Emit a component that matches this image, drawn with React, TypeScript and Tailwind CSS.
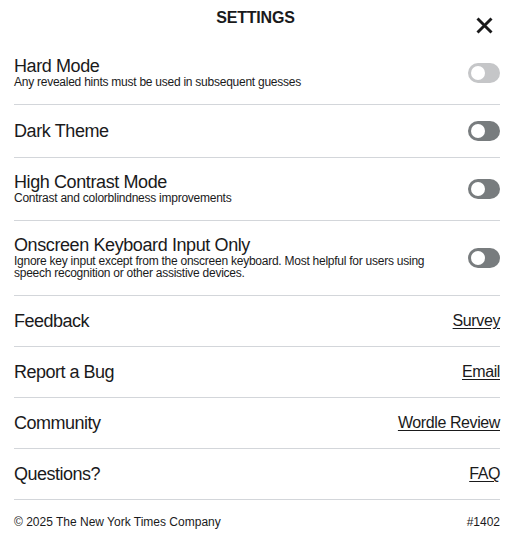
import React from "react";

const font = { fontFamily: '"Liberation Sans", Arial, sans-serif' };

function Toggle({ disabled }: { disabled?: boolean }) {
  return (
    <div
      className={`flex h-[20px] w-[32px] shrink-0 items-center rounded-full px-[3px] ${
        disabled ? "bg-[#c5c6c8]" : "bg-[#787c7e]"
      }`}
    >
      <div className="h-[14px] w-[14px] rounded-full bg-white" />
    </div>
  );
}

function ToggleRow({ title, desc, disabled }: { title: string; desc?: string; disabled?: boolean }) {
  return (
    <div
      className={`flex items-center justify-between border-b border-[#d3d6da] ${
        desc ? "pt-[15px] pb-[16px]" : "py-[16px]"
      }`}
    >
      <div className="flex flex-col pr-[34px]">
        <div
          className={`text-[18px] tracking-[-0.4px] text-[#1a1a1b] ${
            desc ? "leading-[19px]" : "leading-[18px]"
          }`}
        >
          {title}
        </div>
        {desc && (
          <div className="text-[12px] leading-[12px] tracking-[-0.25px] text-[#1a1a1b]">{desc}</div>
        )}
      </div>
      <Toggle disabled={disabled} />
    </div>
  );
}

function LinkRow({ title, link }: { title: string; link: string }) {
  return (
    <div className="flex items-center justify-between border-b border-[#d3d6da] py-[16px]">
      <div className="text-[18px] leading-[18px] tracking-[-0.5px] text-[#1a1a1b]">{title}</div>
      <a className="text-[16px] leading-[18px] tracking-[-0.4px] text-[#1a1a1b] underline underline-offset-2">
        {link}
      </a>
    </div>
  );
}

export default function App() {
  return (
    <div className="h-[553px] w-[511px] bg-white" style={font}>
      <div className="relative flex h-[42px] items-start justify-center pt-[9px]">
        <h1 className="text-[16px] font-bold leading-[18px] tracking-[-0.2px] text-[#1a1a1b]">SETTINGS</h1>
        <button className="absolute right-[18px] top-[17px] text-[#1a1a1b]">
          <svg width="17" height="17" viewBox="0 0 17 17" className="block">
            <path d="M1.5 1.5L15.5 15.5M15.5 1.5L1.5 15.5" stroke="currentColor" strokeWidth="2.9" />
          </svg>
        </button>
      </div>
      <div className="flex flex-col pl-[14px] pr-[11px]">
        <ToggleRow title="Hard Mode" desc="Any revealed hints must be used in subsequent guesses" disabled />
        <ToggleRow title="Dark Theme" />
        <ToggleRow title="High Contrast Mode" desc="Contrast and colorblindness improvements" />
        <ToggleRow
          title="Onscreen Keyboard Input Only"
          desc="Ignore key input except from the onscreen keyboard. Most helpful for users using speech recognition or other assistive devices."
        />
        <LinkRow title="Feedback" link="Survey" />
        <LinkRow title="Report a Bug" link="Email" />
        <LinkRow title="Community" link="Wordle Review" />
        <LinkRow title="Questions?" link="FAQ" />
        <div className="flex items-center justify-between pt-[16px] text-[12px] leading-[12px] text-[#1a1a1b]">
          <span>© 2025 The New York Times Company</span>
          <span>#1402</span>
        </div>
      </div>
    </div>
  );
}
